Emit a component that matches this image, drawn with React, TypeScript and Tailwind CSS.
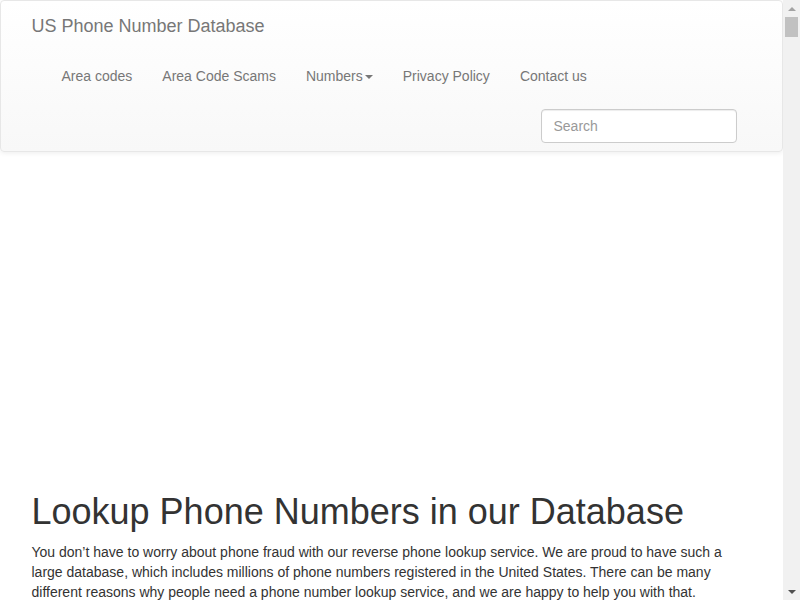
export default function App() {
  const links = ["Area codes", "Area Code Scams", "Numbers", "Privacy Policy", "Contact us"];
  return (
    <div className="flex h-screen w-full overflow-hidden bg-white font-['Liberation_Sans',Arial,sans-serif] text-[14px] leading-[20px] text-[#333]">
      {/* page */}
      <div className="flex-1 overflow-hidden">
        <nav className="mb-5 rounded border border-[#e7e7e7] bg-gradient-to-b from-white to-[#f8f8f8] shadow-[0_1px_5px_rgba(0,0,0,0.075)]">
          <div className="mx-auto w-[750px] px-[15px]">
            <div className="flex h-[50px] items-center text-[18px] text-[#777]">
              <span className="leading-[20px]">US Phone Number Database</span>
            </div>
            <ul className="flex px-[15px] text-[#777]">
              {links.map((l) => (
                <li key={l} className="flex items-center px-[15px] py-[15px]">
                  {l}
                  {l === "Numbers" && (
                    <span className="ml-[2px] mt-[1px] inline-block h-0 w-0 border-x-4 border-t-4 border-x-transparent border-t-[#777]" />
                  )}
                </li>
              ))}
            </ul>
            <div className="flex justify-end px-[15px] py-2">
              <input
                placeholder="Search"
                className="h-[34px] w-[196px] rounded border border-[#ccc] bg-white px-3 text-[14px] text-[#555] shadow-[inset_0_1px_1px_rgba(0,0,0,0.075)] outline-none placeholder:text-[#999]"
              />
            </div>
          </div>
        </nav>
        {/* ad slot */}
        <div className="h-[300px]" />
        <div className="mx-auto w-[750px] px-[15px]">
          <h1 className="mb-[10px] mt-5 text-[36px] leading-[1.1] font-normal text-[#333]">
            Lookup Phone Numbers in our Database
          </h1>
          <p className="mb-[10px]">
            You don’t have to worry about phone fraud with our reverse phone lookup service. We are proud to have such a
            large database, which includes millions of phone numbers registered in the United States. There can be many
            different reasons why people need a phone number lookup service, and we are happy to help you with that.
          </p>
        </div>
      </div>
      {/* scrollbar */}
      <div className="flex w-[17px] shrink-0 flex-col bg-[#f1f1f1]">
        <div className="flex h-[17px] items-center justify-center">
          <span className="h-0 w-0 border-x-4 border-b-4 border-x-transparent border-b-[#a3a3a3]" />
        </div>
        <div className="mx-[2px] h-[20px] bg-[#c1c1c1]" />
        <div className="flex-1" />
        <div className="flex h-[17px] items-center justify-center">
          <span className="h-0 w-0 border-x-4 border-t-4 border-x-transparent border-t-[#505050]" />
        </div>
      </div>
    </div>
  );
}
